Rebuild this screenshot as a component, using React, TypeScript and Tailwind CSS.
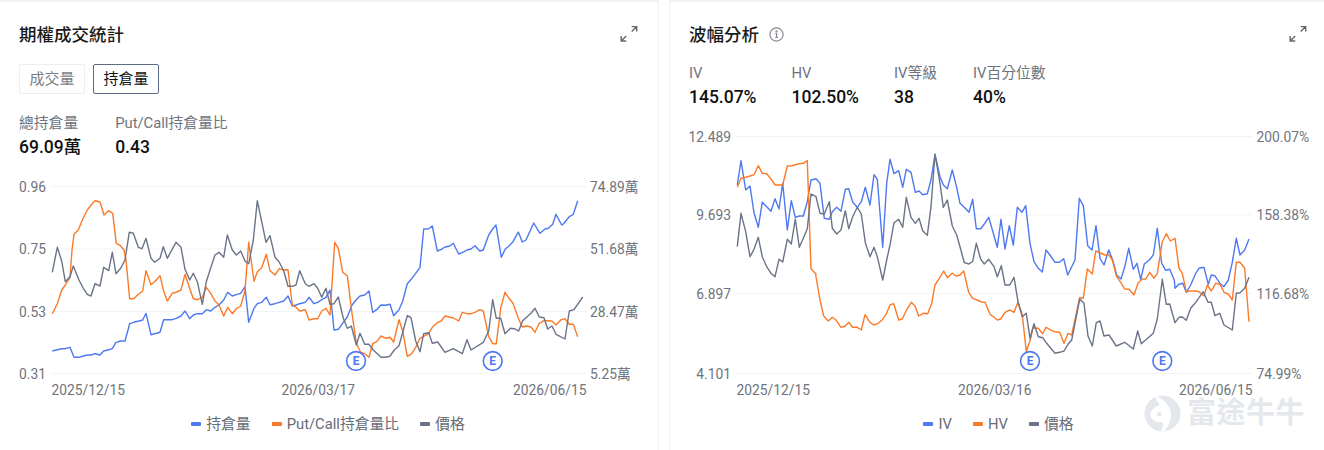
const pts = (ox: number, oy: number, s: string) =>
  s
    .trim()
    .split(/\s+/)
    .map((p) => {
      const [x, y] = p.split(",").map(Number)
      return `${(ox + x / 3).toFixed(1)},${(oy + y / 3).toFixed(1)}`
    })
    .join(" ")

const BLUE = "#4d78f2"
const ORANGE = "#fb7a28"
const GRAY = "#6a7388"

// traced series, points are given in 3x crop coordinates
const oiBlue = [
  pts(0, 225, "157,378 172,374 185,371 196,371 210,367 222,397 237,397 250,393 262,390 273,390 285,386 300,390 311,378 326,374 337,371 348,352 362,348 375,348 389,296 401,292 417,288 428,285 438,265 453,329 464,326 480,322 491,284 502,284 517,284 529,280 543,273 555,258 569,281 580,270 592,266 607,266 619,254 632,258 645,247 657,240 671,225 683,202 697,213 709,209 722,205 735,185 746,292 762,250 772,236 785,232 799,217 810,239 825,236 838,232 851,228 864,213 877,243 888,240 899,236 916,232 927,217 942,236 953,232 965,224 978,217 990,195"),
  pts(330, 225, "12,315 25,313 40,292 52,276 66,240 79,224 90,213 104,210 117,198 128,262 140,254 153,240 167,241 180,238 191,272 207,254 218,228 232,176 245,161 257,145 270,127 281,12 296,11 307,3 322,78 334,73 345,66 358,64 370,55 386,87 397,83 411,75 423,72 435,62 449,78 460,75 476,30 488,12 498,0 514,97 526,72 537,63 549,50 565,21 577,51 588,45 611,-6 630,25 645,12 655,10 668,-2 678,-32 695,0 700,-3 718,-25 730,-32 743,-73"),
].join(" ")

const oiOrange = [
  pts(0, 225, "157,266 172,236 185,195 196,180 210,157 216,75 222,28 235,15 247,-15 262,-45 275,-62 285,-73 300,-69 312,-30 326,-43 338,-35 349,55 360,61 372,75 378,105 389,221 401,221 417,206 428,198 438,137 453,179 464,170 480,152 491,198 502,228 517,205 529,202 543,195 555,148 569,190 580,221 592,224 607,217 619,187 632,205 645,228 657,240 671,273 683,247 697,266 709,251 722,243 735,198 746,52 762,169 772,140 785,128 799,88 810,137 825,150 838,131 851,135 864,134 877,240 888,247 899,258 916,254 927,285 942,281 953,281 965,258 978,250 990,270"),
  pts(330, 225, "14,52 25,70 38,142 52,152 66,265 79,355 92,382 104,386 117,397 128,356 140,350 153,333 167,340 180,337 191,351 207,284 218,318 232,394 245,386 257,367 270,340 285,332 296,326 307,307 322,293 334,288 345,273 358,276 370,279 386,288 397,262 411,266 423,266 435,262 449,254 460,258 476,335 488,356 499,356 512,250 525,202 537,220 549,235 565,280 577,306 589,303 603,306 615,322 628,295 642,287 666,288 678,300 692,285 705,281 718,298 730,298 743,335"),
].join(" ")

const oiGray = [
  pts(0, 225, "157,142 172,67 185,108 196,170 210,155 220,123 237,165 250,190 262,208 273,213 285,176 300,183 311,127 326,137 337,82 348,146 362,130 375,105 388,22 400,25 415,67 426,71 438,40 453,100 464,112 480,100 490,65 502,100 528,52 543,67 555,133 569,165 580,145 592,170 607,238 619,170 630,135 645,90 657,82 671,97 682,30 697,75 709,90 722,78 735,108 746,116 760,45 772,-73 785,-10 798,52 810,32 825,97 838,112 851,137 864,184 877,184 888,180 899,137 916,176 927,184 942,176 953,190 965,217 978,190 990,238"),
  pts(330, 225, "12,236 25,216 40,280 52,310 64,303 79,360 90,325 104,358 117,358 130,375 153,397 167,397 179,394 193,375 207,362 232,272 243,278 257,348 270,380 281,326 296,323 307,355 323,351 345,382 370,371 397,386 411,344 423,375 460,352 476,318 488,224 499,280 512,280 525,326 541,310 553,311 566,318 578,287 603,265 615,250 628,276 642,278 653,312 666,303 678,328 705,342 718,258 732,254 758,216"),
].join(" ")

const ivBlue = [
  pts(730, 150, "22,105 33,32 47,120 60,108 72,188 85,232 97,157 110,170 123,184 135,146 147,177 158,100 172,240 184,152 196,202 208,198 220,198 232,155 243,90 258,86 270,100 283,205 298,208 307,185 320,172 333,184 346,118 356,116 368,157 382,172 394,155 406,112 420,165 432,74 442,88 458,292 470,100 480,28 492,71 506,62 518,112 529,58 543,67 556,127 567,123 578,134 592,131 603,90 615,14 630,80 640,105 652,116 667,60 680,112 690,160 703,172 717,187 728,148 739,236 752,236 763,222 776,202"),
  pts(990, 190, "10,130 22,172 33,88 45,177 58,107 70,165 82,52 96,67 107,47 120,160 132,215 145,235 157,246 168,180 182,198 195,217 208,217 221,206 233,255 255,210 268,25 280,47 293,167 306,180 318,107 330,205 342,225 356,180 368,210 380,255 393,267 405,228 416,175 430,238 441,220 452,268 463,222 478,210 490,195 502,115 515,220 527,241 539,238 553,270"),
  pts(994, 225, "543,190 555,178 566,175 577,202 590,180 605,145 615,130 630,127 643,178 652,150 662,152 680,178 690,185 703,165 715,112 727,40 738,90 752,75 765,42"),
].join(" ")

const ivOrange = [
  pts(730, 150, "22,112 33,85 47,82 60,78 72,74 85,47 97,70 110,71 123,87 135,105 158,105 172,48 184,47 196,44 208,41 220,40 232,32 243,356 258,372"),
  pts(660, 225, "467,150 480,225 491,273 505,288 517,277 527,284 543,307 555,304 566,292 578,307 592,307 604,315 615,269 630,292 641,300 653,296 667,284 678,269 690,240 701,236 716,285 727,282 740,254 754,232 765,243 776,273 790,265 803,266 815,235 825,180 838,160 851,138 862,158 877,145 888,153 899,151 911,138 926,202 938,220 952,225 965,231 975,232 990,268"),
  pts(994, 225, "0,277 10,285 20,282 33,262 47,255 60,262 72,231 85,270 97,380 110,340 117,308 133,310 146,326 156,307 172,316 182,320 197,322 210,355 222,325 233,330 257,218 268,220 280,132 295,147 305,78 320,84 332,90 345,90 355,105 368,155 380,172 392,192 405,193 420,210 432,175 445,162 455,162 467,142 480,160 490,145 505,50 517,26 529,48 543,40 555,130 565,145 577,200 590,198 605,198 615,200 630,213 640,180 652,198 665,175 678,178 690,202 703,207 715,225 727,112 738,112 752,130 765,290"),
].join(" ")

const ivGray = [
  pts(730, 150, "22,290 33,190 47,245 60,320 72,298 85,262 97,320 110,350 123,370 135,380 147,328 158,336 172,268 184,282 196,207 208,292 220,265 232,236 243,132 258,140 270,190 283,192 298,155 307,235 320,252 333,240 346,182 356,236 368,200 382,172 394,192 406,278 420,320 432,292 442,320 458,390 470,330 480,285 492,218 506,208 518,232 529,142 543,202 556,220 567,205 578,242 592,256 603,170 615,12 630,100 640,172 652,150 667,228 680,255 690,290 703,338 717,342 728,334 739,280 752,328 763,342 776,328"),
  pts(994, 225, "0,125 10,155 22,122 33,180 47,180 60,157 72,230 85,275 97,265 108,340 120,296 133,335 146,338 158,355 183,385 197,382 210,378 222,358 233,345 257,222 270,235 282,333 295,363 307,293 318,288 330,333 345,330 367,363 392,352 418,372 431,318 442,356 478,325 490,282 505,163 517,238 527,237 543,293 555,277 565,276 577,286 590,250 603,235 628,200 642,232 652,232 663,272 677,265 690,300 715,315 727,205 738,203 752,190 765,157"),
].join(" ")

function ExpandIcon() {
  return (
    <svg width="18" height="17" viewBox="0 0.7 18 17" fill="none" stroke="#666" strokeWidth="1.4">
      <path d="M11.700 1.200h5v5M16.700 1.200l-5 5" />
      <path d="M1.200 10.700v5h5M1.200 15.700l5-5" />
    </svg>
  )
}

function InfoIcon() {
  return (
    <svg width="15" height="15" viewBox="0 0 15 15" fill="none" stroke="#85898f" strokeWidth="1.2">
      <circle cx="7.500" cy="7.500" r="6.600" />
      <path d="M6.400 6.400h1.200v4M6.200 10.500h2.700" />
      <circle cx="7.500" cy="4.300" r="0.500" fill="#85898f" />
    </svg>
  )
}

function Stat({ label, value, className }: { label: string; value: string; className?: string }) {
  return (
    <div className={className}>
      <div className="text-[14.8px] leading-[20px] text-[#70747c]">{label}</div>
      <div className="mt-[2px] text-[17.5px] leading-[24px] font-medium text-[#111]">{value}</div>
    </div>
  )
}

function Legend({ items, className }: { items: { name: string; color: string }[]; className?: string }) {
  return (
    <div className={`mt-[9px] flex h-[20px] items-center justify-center gap-[21px] text-[14.8px] text-[#666b75] ${className ?? ""}`}>
      {items.map((item) => (
        <div key={item.name} className="flex items-center gap-[5px]">
          <span className="h-[4px] w-[10px] rounded-[1px]" style={{ background: item.color }} />
          <span>{item.name}</span>
        </div>
      ))}
    </div>
  )
}

function EBadge({ x, y }: { x: number; y: number }) {
  return (
    <g>
      <circle cx={x} cy={y} r="9.400" fill="#fff" stroke={BLUE} strokeWidth="1.600" />
      <text x={x} y={y + 4.3} textAnchor="middle" fill={BLUE} className="text-[12px] font-bold">
        E
      </text>
    </g>
  )
}

function Lines({ blue, orange, gray }: { blue: string; orange: string; gray: string }) {
  return (
    <g fill="none" strokeWidth="1.4" strokeLinejoin="round">
      <polyline points={blue} stroke={BLUE} />
      <polyline points={orange} stroke={ORANGE} />
      <polyline points={gray} stroke={GRAY} />
    </g>
  )
}

function OpenInterestChart() {
  const rows = [
    { y: 186.5, l: "0.96", r: "74.89萬" },
    { y: 249, l: "0.75", r: "51.68萬" },
    { y: 311.5, l: "0.53", r: "28.47萬" },
    { y: 373.5, l: "0.31", r: "5.25萬" },
  ]
  return (
    <svg className="block h-[230px] w-[658px]" viewBox="0 175 658 230">
      {rows.map((r) => (
        <g key={r.l}>
          <line x1="51" x2="586" y1={r.y} y2={r.y} stroke="#f2f3f5" />
          <text x="46" y={r.y + 5} textAnchor="end" fill="#6f737b" className="text-[13.8px]">
            {r.l}
          </text>
          <text x="590" y={r.y + 5} fill="#6f737b" className="text-[13.8px]">
            {r.r}
          </text>
        </g>
      ))}
      <g fill="#6f737b" className="text-[13.8px]">
        <text x="51.5" y="395">2025/12/15</text>
        <text x="281.5" y="395">2026/03/17</text>
        <text x="513" y="395">2026/06/15</text>
      </g>
      <Lines blue={oiBlue} orange={oiOrange} gray={oiGray} />
      <EBadge x={356} y={361} />
      <EBadge x={492.7} y={361} />
    </svg>
  )
}

function VolatilityChart() {
  const rows = [
    { y: 136.5, l: "12.489", r: "200.07%" },
    { y: 215, l: "9.693", r: "158.38%" },
    { y: 293.5, l: "6.897", r: "116.68%" },
    { y: 373.5, l: "4.101", r: "74.99%" },
  ]
  return (
    <svg className="block h-[280px] w-[654px]" viewBox="670 125 654 280">
      {rows.map((r) => (
        <g key={r.l}>
          <line x1="736" x2="1252" y1={r.y} y2={r.y} stroke="#f2f3f5" />
          <text x="731" y={r.y + 5} textAnchor="end" fill="#6f737b" className="text-[13.8px]">
            {r.l}
          </text>
          <text x="1256.5" y={r.y + 5} fill="#6f737b" className="text-[13.8px]">
            {r.r}
          </text>
        </g>
      ))}
      <g fill="#6f737b" className="text-[13.8px]">
        <text x="736.5" y="395">2025/12/15</text>
        <text x="958" y="395">2026/03/16</text>
        <text x="1179" y="395">2026/06/15</text>
      </g>
      <Lines blue={ivBlue} orange={ivOrange} gray={ivGray} />
      <EBadge x={1030} y={361} />
      <EBadge x={1162.3} y={361} />
    </svg>
  )
}

function Watermark() {
  return (
    <div className="absolute bottom-[18px] right-[19px] flex items-center gap-[6px] text-[#e4e8ec]">
      <svg width="37" height="37" viewBox="0 0 37 37">
        <circle cx="18.500" cy="18.500" r="18" fill="#e4e8ec" />
        <path d="M11 1C19 3 26 10 27 18 27.500 26 24 32 20 36.500L17 36C20 31 20 27 17 27 11 28 7 24 6 19 8 14 12 11 16 10 14 7 12 4 11 1Z" fill="#fff" />
        <circle cx="15.300" cy="19.300" r="2.200" fill="#e4e8ec" />
      </svg>
      <span className="text-[29px] leading-[37px] font-bold tracking-[0.5px]">富途牛牛</span>
    </div>
  )
}

export default function App() {
  return (
    <div className="flex h-[450px] w-[1324px] gap-[10px] overflow-hidden bg-white font-['Roboto','Noto_Sans_CJK_TC',sans-serif]">
      <section className="h-full w-[659px] shrink-0 border-t-2 border-r border-[#f3f3f3]">
        <div className="mt-[20px] flex h-[24px] items-center justify-between pr-[20px] pl-[19px]">
          <h2 className="mt-[2px] text-[17.5px] font-medium text-[#1a1a1a]">期權成交統計</h2>
          <ExpandIcon />
        </div>
        <div className="mt-[18px] flex gap-[8px] pl-[19px] text-[15px]">
          <button className="h-[30px] w-[66px] rounded-[2px] border border-[#eeeeee] text-[#7a7e85]">成交量</button>
          <button className="h-[30px] w-[66px] rounded-[2px] border border-[#5d6a85] text-[#111]">持倉量</button>
        </div>
        <div className="mt-[19px] flex gap-[34px] pl-[19px]">
          <Stat label="總持倉量" value="69.09萬" />
          <Stat label="Put/Call持倉量比" value="0.43" />
        </div>
        <div className="mt-[16px]">
          <OpenInterestChart />
        </div>
        <Legend
          className="pr-[2px]"
          items={[
            { name: "持倉量", color: BLUE },
            { name: "Put/Call持倉量比", color: ORANGE },
            { name: "價格", color: GRAY },
          ]}
        />
      </section>

      <section className="relative h-full w-[655px] shrink-0 border-t-2 border-l border-[#f3f3f3]">
        <div className="mt-[20px] flex h-[24px] items-center justify-between pr-[17px] pl-[19px]">
          <div className="flex items-center gap-[10px]">
            <h2 className="mt-[2px] text-[17.5px] font-medium text-[#1a1a1a]">波幅分析</h2>
            <InfoIcon />
          </div>
          <ExpandIcon />
        </div>
        <div className="mt-[17px] flex pl-[19px]">
          <Stat className="w-[102.5px]" label="IV" value="145.07%" />
          <Stat className="w-[102.5px]" label="HV" value="102.50%" />
          <Stat className="w-[79px]" label="IV等級" value="38" />
          <Stat label="IV百分位數" value="40%" />
        </div>
        <div className="mt-[16px]">
          <VolatilityChart />
        </div>
        <Legend
          className="pl-[3px]"
          items={[
            { name: "IV", color: BLUE },
            { name: "HV", color: ORANGE },
            { name: "價格", color: GRAY },
          ]}
        />
        <Watermark />
      </section>
    </div>
  )
}
